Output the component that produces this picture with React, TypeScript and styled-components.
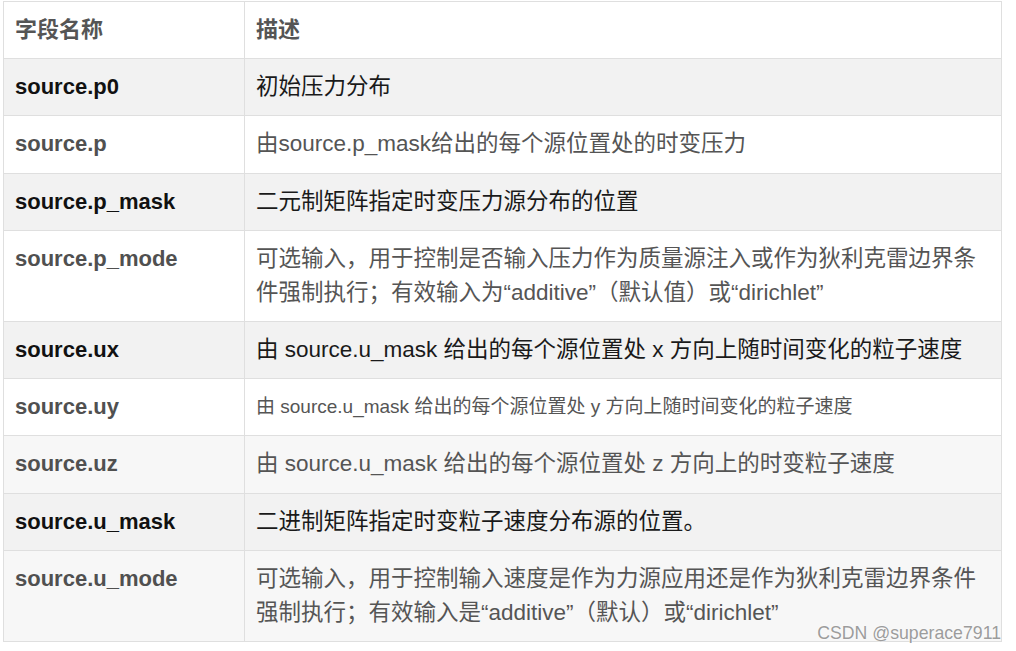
import { createGlobalStyle } from "styled-components";
import styled from "styled-components";

const GlobalStyle = createGlobalStyle`
    html, body {
        margin: 0;
        padding: 0;
        background: #ffffff;
    }
    body {
        font-family: "Liberation Sans", "Noto Sans CJK SC", Arial, sans-serif;
        text-spacing-trim: space-all;
    }
`;

type Tone = "plain" | "shade" | "soft";

interface Row {
    field: string;
    desc: string;
    tone: Tone;
    strong?: boolean;
    small?: boolean;
}

const rows: Row[] = [
    { field: "source.p0", desc: "初始压力分布", tone: "shade", strong: true },
    { field: "source.p", desc: "由source.p_mask给出的每个源位置处的时变压力", tone: "plain" },
    { field: "source.p_mask", desc: "二元制矩阵指定时变压力源分布的位置", tone: "shade", strong: true },
    {
        field: "source.p_mode",
        desc: "可选输入，用于控制是否输入压力作为质量源注入或作为狄利克雷边界条件强制执行；有效输入为“additive”（默认值）或“dirichlet”",
        tone: "plain",
    },
    {
        field: "source.ux",
        desc: "由 source.u_mask 给出的每个源位置处 x 方向上随时间变化的粒子速度",
        tone: "shade",
        strong: true,
    },
    {
        field: "source.uy",
        desc: "由 source.u_mask 给出的每个源位置处 y 方向上随时间变化的粒子速度",
        tone: "plain",
        small: true,
    },
    { field: "source.uz", desc: "由 source.u_mask 给出的每个源位置处 z 方向上的时变粒子速度", tone: "soft" },
    { field: "source.u_mask", desc: "二进制矩阵指定时变粒子速度分布源的位置。", tone: "shade", strong: true },
    {
        field: "source.u_mode",
        desc: "可选输入，用于控制输入速度是作为力源应用还是作为狄利克雷边界条件强制执行；有效输入是“additive”（默认）或“dirichlet”",
        tone: "soft",
    },
];

const backgrounds: Record<Tone, string> = {
    plain: "#ffffff",
    shade: "#f2f2f2",
    soft: "#f7f7f7",
};

const Page = styled.div`
    position: relative;
    width: 1016px;
    height: 651px;
    padding: 1px 0 0 3px;
    box-sizing: border-box;
`;

const Table = styled.div`
    width: 999px;
    border: 1px solid #dfdfdf;
    box-sizing: border-box;
`;

const TableRow = styled.div<{ $tone: Tone }>`
    display: grid;
    grid-template-columns: 241px 1fr;
    background: ${(p) => backgrounds[p.$tone]};
    border-top: 1px solid #dfdfdf;

    &:first-child {
        border-top: none;
    }
`;

const FieldCell = styled.div<{ $strong?: boolean }>`
    padding: 11.1px 11px;
    border-right: 1px solid #dfdfdf;
    font-family: "Liberation Sans", Arial, sans-serif;
    font-weight: 700;
    font-size: 22px;
    line-height: 34px;
    color: ${(p) => (p.$strong ? "#111111" : "#505050")};
`;

const DescCell = styled.div<{ $strong?: boolean; $small?: boolean }>`
    padding: 11.1px 4px 11.1px 11px;
    font-family: "Liberation Sans", "Noto Sans CJK SC", sans-serif;
    font-size: ${(p) => (p.$small ? "19px" : "22.5px")};
    line-height: 34px;
    color: ${(p) => (p.$strong ? "#1a1a1a" : "#555555")};
`;

const HeadCell = styled(FieldCell)`
    font-family: "Liberation Sans", "Noto Sans CJK SC", sans-serif;
    color: #555555;
`;

const HeadDesc = styled(HeadCell)`
    border-right: none;
`;

const Watermark = styled.div`
    position: absolute;
    right: 15px;
    bottom: 8px;
    font-family: "Liberation Sans", Arial, sans-serif;
    font-size: 17.7px;
    line-height: 20px;
    color: #9c9c9c;
    text-shadow: 0 0 2px #ffffff;
`;

export default function App() {
    return (
        <>
            <GlobalStyle />
            <Page>
                <Table>
                    <TableRow $tone="plain">
                        <HeadCell>字段名称</HeadCell>
                        <HeadDesc>描述</HeadDesc>
                    </TableRow>
                    {rows.map((r) => (
                        <TableRow key={r.field} $tone={r.tone}>
                            <FieldCell $strong={r.strong}>{r.field}</FieldCell>
                            <DescCell $strong={r.strong} $small={r.small}>
                                {r.desc}
                            </DescCell>
                        </TableRow>
                    ))}
                </Table>
                <Watermark>CSDN @superace7911</Watermark>
            </Page>
        </>
    );
}
